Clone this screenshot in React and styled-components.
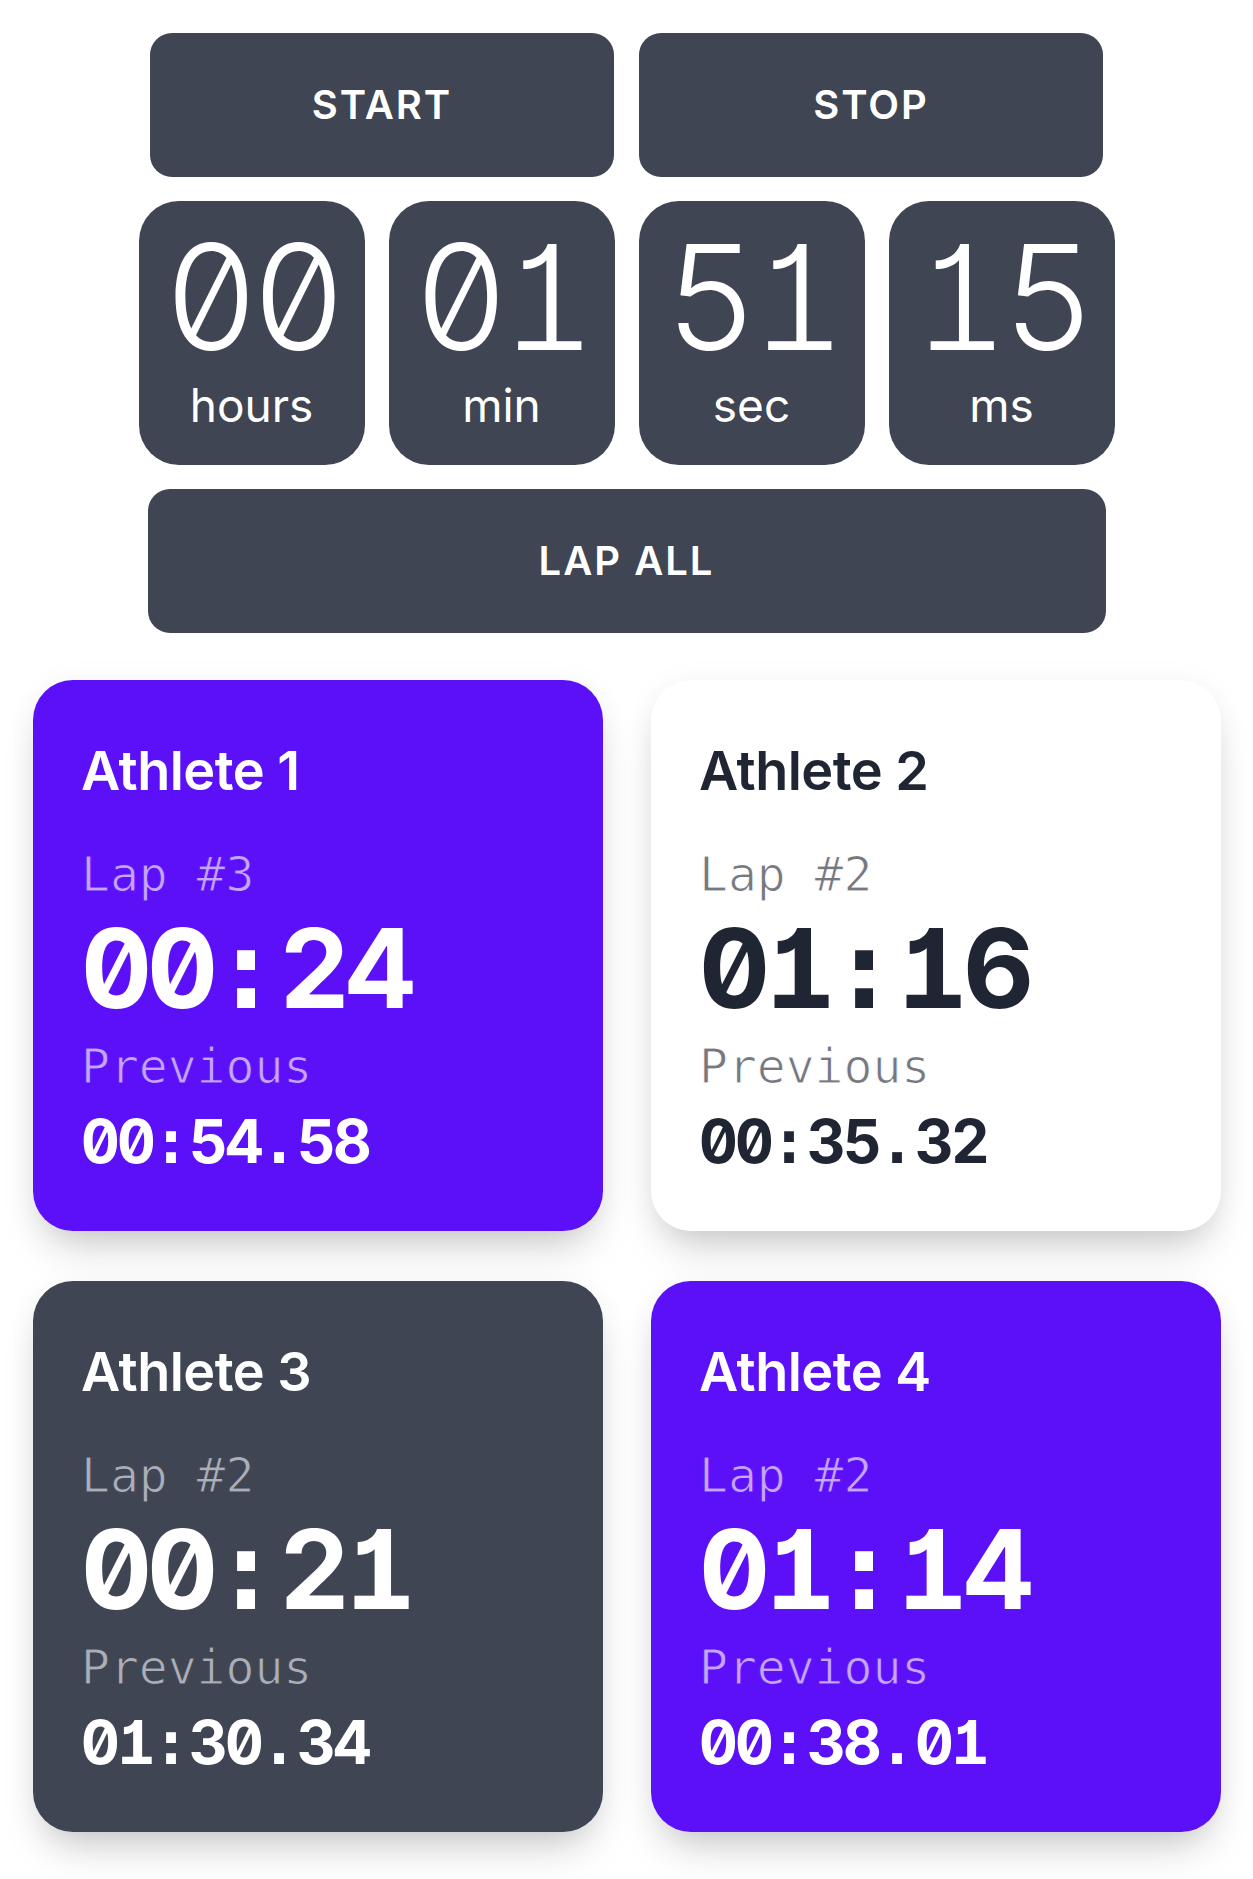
import styled, { createGlobalStyle } from "styled-components";

const GlobalStyle = createGlobalStyle`
	html, body {
		margin: 0;
		padding: 0;
		background: #ffffff;
	}
	body {
		font-family: Inter, "Noto Sans", "Liberation Sans", sans-serif;
	}
`;

const MONO = `"DejaVu Sans Mono", "Liberation Mono", monospace`;

const themes = {
	purple: { bg: "#5b10f7", title: "#ffffff", label: "#c6a4ff", value: "#ffffff" },
	white: { bg: "#ffffff", title: "#1f2532", label: "#76787f", value: "#1f2532" },
	gray: { bg: "#3f4552", title: "#ffffff", label: "#abafb9", value: "#ffffff" },
};

const athletes = [
	{ id: 1, name: "Athlete 1", lap: 3, time: "00:24", previous: "00:54.58", theme: "purple" },
	{ id: 2, name: "Athlete 2", lap: 2, time: "01:16", previous: "00:35.32", theme: "white" },
	{ id: 3, name: "Athlete 3", lap: 2, time: "00:21", previous: "01:30.34", theme: "gray" },
	{ id: 4, name: "Athlete 4", lap: 2, time: "01:14", previous: "00:38.01", theme: "purple" },
];

const units = [
	{ value: "00", label: "hours" },
	{ value: "01", label: "min" },
	{ value: "51", label: "sec" },
	{ value: "15", label: "ms" },
];

// digits set in fixed cells so Inter (which has a slashed zero) reads like a mono face
const Cell = styled.span`
	display: inline-block;
	width: 0.6em;
	text-align: center;
	font-family: ${({ $punct }) => ($punct ? MONO : "Inter, sans-serif")};
`;

const Digits = ({ children }) =>
	children.split("").map((ch, i) => (
		<Cell key={i} $punct={ch === ":" || ch === "."}>
			{ch}
		</Cell>
	));

const Page = styled.div`
	width: 1253px;
	padding-top: 33px;
	padding-bottom: 47px;
	display: flex;
	flex-direction: column;
	align-items: center;
`;

const ButtonRow = styled.div`
	display: grid;
	grid-template-columns: 464px 464px;
	gap: 25px;
`;

const ActionButton = styled.button`
	height: 144px;
	width: ${({ $wide }) => ($wide ? "958px" : "100%")};
	border: none;
	border-radius: 22px;
	background: #3f4552;
	color: #ffffff;
	font-family: Inter, "Noto Sans", sans-serif;
	font-size: 40px;
	font-weight: 600;
	letter-spacing: 2px;
	line-height: 1;
	display: flex;
	align-items: center;
	justify-content: center;
	cursor: pointer;
	margin-top: ${({ $wide }) => ($wide ? "24px" : "0")};
`;

const TileRow = styled.div`
	display: grid;
	grid-template-columns: repeat(4, 226px);
	gap: 24px;
	margin-top: 24px;
`;

const Tile = styled.div`
	height: 264px;
	box-sizing: border-box;
	padding-top: 31px;
	border-radius: 40px;
	background: #3f4552;
	color: #ffffff;
	display: flex;
	flex-direction: column;
	align-items: center;
`;

const TileValue = styled.div`
	font-feature-settings: "tnum", "zero", "cv01";
	font-weight: 300;
	font-size: 146px;
	line-height: 130px;
	white-space: nowrap;
`;

const TileLabel = styled.div`
	margin-top: 18px;
	font-size: 46px;
	line-height: 50px;
	font-weight: 400;
`;

const CardGrid = styled.div`
	align-self: stretch;
	display: grid;
	grid-template-columns: 570px 570px;
	column-gap: 48px;
	row-gap: 50px;
	padding-left: 33px;
	margin-top: 47px;
`;

const Card = styled.div`
	height: 551px;
	box-sizing: border-box;
	padding: 61px 48px 0;
	border-radius: 40px;
	background: ${({ $theme }) => themes[$theme].bg};
	box-shadow: 0 24px 40px -12px rgba(0, 0, 0, 0.22), 0 0 30px rgba(0, 0, 0, 0.04);
`;

const CardTitle = styled.div`
	font-size: 54px;
	line-height: 60px;
	font-weight: 600;
	letter-spacing: -0.5px;
	color: ${({ $theme }) => themes[$theme].title};
`;

const CardLabel = styled.div`
	font-family: ${MONO};
	font-size: 48px;
	line-height: 56px;
	margin-top: ${({ $gap }) => $gap}px;
	color: ${({ $theme }) => themes[$theme].label};
	-webkit-text-stroke: 1px ${({ $theme }) => themes[$theme].bg};
	paint-order: fill stroke;
`;

const LapTime = styled.div`
	font-feature-settings: "tnum", "zero", "cv01";
	font-size: 110px;
	line-height: 110px;
	font-weight: 700;
	margin-top: 11px;
	white-space: nowrap;
	color: ${({ $theme }) => themes[$theme].value};
`;

const PreviousTime = styled.div`
	font-feature-settings: "tnum", "zero", "cv01";
	font-size: 60px;
	line-height: 64px;
	font-weight: 700;
	margin-top: 15px;
	white-space: nowrap;
	color: ${({ $theme }) => themes[$theme].value};
`;

const AthleteCard = ({ name, lap, time, previous, theme }) => (
	<Card $theme={theme}>
		<CardTitle $theme={theme}>{name}</CardTitle>
		<CardLabel $theme={theme} $gap={45}>
			Lap #{lap}
		</CardLabel>
		<LapTime $theme={theme}>
			<Digits>{time}</Digits>
		</LapTime>
		<CardLabel $theme={theme} $gap={13}>
			Previous
		</CardLabel>
		<PreviousTime $theme={theme}>
			<Digits>{previous}</Digits>
		</PreviousTime>
	</Card>
);

export default function App() {
	return (
		<>
			<GlobalStyle />
			<Page>
				<ButtonRow>
					<ActionButton>START</ActionButton>
					<ActionButton>STOP</ActionButton>
				</ButtonRow>
				<TileRow>
					{units.map(({ value, label }) => (
						<Tile key={label}>
							<TileValue>
								<Digits>{value}</Digits>
							</TileValue>
							<TileLabel>{label}</TileLabel>
						</Tile>
					))}
				</TileRow>
				<ActionButton $wide>LAP ALL</ActionButton>
				<CardGrid>
					{athletes.map((athlete) => (
						<AthleteCard key={athlete.id} {...athlete} />
					))}
				</CardGrid>
			</Page>
		</>
	);
}
